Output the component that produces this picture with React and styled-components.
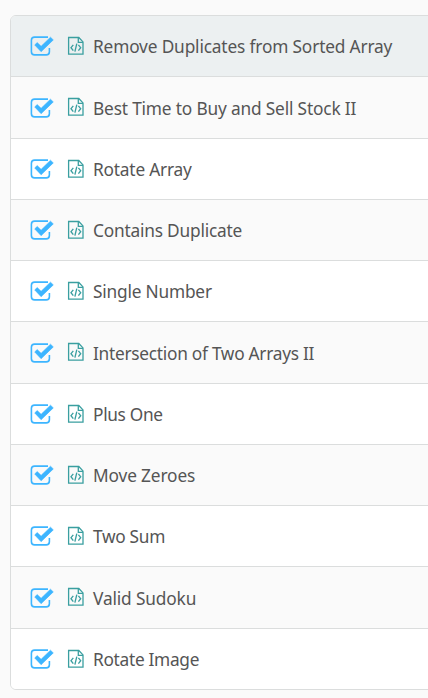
import React from "react";
import styled, { createGlobalStyle } from "styled-components";

const GlobalStyle = createGlobalStyle`
  * { box-sizing: border-box; }
  body {
    margin: 0;
    background: #fafafa;
    font-family: "Noto Sans", "Open Sans", sans-serif;
    overflow: hidden;
  }
`;

const Page = styled.main`
  height: 698px;
  padding: 15px 0 0 10px;
  overflow: hidden;
`;

const List = styled.ul`
  width: 440px;
  height: 675px;
  margin: 0;
  padding: 0;
  list-style: none;
  background: #fff;
  border: 1px solid #dbdddd;
  border-radius: 6px;
  overflow: hidden;
`;

const Row = styled.li`
  display: flex;
  align-items: center;
  height: 61.25px;
  padding-left: 19px;
  background: ${(p) => (p.$active ? "#ecf0f1" : p.$striped ? "#fafafa" : "#fff")};
  border-bottom: 1px solid #dbdddd;

  &:last-child { border-bottom: 0; }
`;

const CheckIcon = styled.svg`
  flex: none;
  width: 26px;
  height: 22px;
  margin-top: 0.5px;
  color: #3db5ff;
`;

const CodeIcon = styled.svg`
  flex: none;
  width: 18px;
  height: 20px;
  margin: 0 8px 0 11px;
  color: #3a9fa0;
`;

const Title = styled.span`
  padding-top: 2.3px;
  font-size: 17.3px;
  line-height: 26px;
  letter-spacing: ${(p) => p.$tracking}px;
  color: #555;
  white-space: nowrap;
`;

const problems = [
  { title: "Remove Duplicates from Sorted Array", tracking: -0.16 },
  { title: "Best Time to Buy and Sell Stock II", tracking: -0.17 },
  { title: "Rotate Array", tracking: -0.2 },
  { title: "Contains Duplicate", tracking: -0.2 },
  { title: "Single Number", tracking: -0.2 },
  { title: "Intersection of Two Arrays II", tracking: -0.27 },
  { title: "Plus One", tracking: -0.33 },
  { title: "Move Zeroes", tracking: -0.14 },
  { title: "Two Sum", tracking: -0.3 },
  { title: "Valid Sudoku", tracking: -0.14 },
  { title: "Rotate Image", tracking: -0.3 },
];

function Checked() {
  return (
    <CheckIcon viewBox="0 0 26 22" fill="none" aria-hidden="true">
      <path
        d="M18 2.1H4.6a3.2 3.2 0 0 0-3.2 3.2v11.4a3.2 3.2 0 0 0 3.2 3.2h11.6a3.2 3.2 0 0 0 3.2-3.2V13"
        stroke="currentColor"
        strokeWidth="1.6"
      />
      <path
        d="M4.7 9.9 7.2 7.6l3.9 3.7 9.4-9.1 2.8 2.7-12.2 11.8z"
        fill="currentColor"
        stroke="currentColor"
        strokeWidth="0.6"
        strokeLinejoin="round"
      />
    </CheckIcon>
  );
}

function CodeFile() {
  return (
    <CodeIcon viewBox="0 0 18 20" fill="none" stroke="currentColor" aria-hidden="true">
      <path d="M1.6 1.5h10.2l4.2 4.4v12.2H1.6z" strokeWidth="1.3" />
      <path d="M11.3 1.6v4.7H16" strokeWidth="1.3" />
      <path d="M6.3 8.8 4 11.7l2.3 2.9M11.4 8.8l2.3 2.9-2.3 2.9M9.8 7.6 7.9 15.6" strokeWidth="1.35" />
    </CodeIcon>
  );
}

export default function App() {
  return (
    <>
      <GlobalStyle />
      <Page>
        <List>
          {problems.map(({ title, tracking }, i) => (
            <Row key={title} $active={i === 0} $striped={i % 2 === 1}>
              <Checked />
              <CodeFile />
              <Title $tracking={tracking}>{title}</Title>
            </Row>
          ))}
        </List>
      </Page>
    </>
  );
}
